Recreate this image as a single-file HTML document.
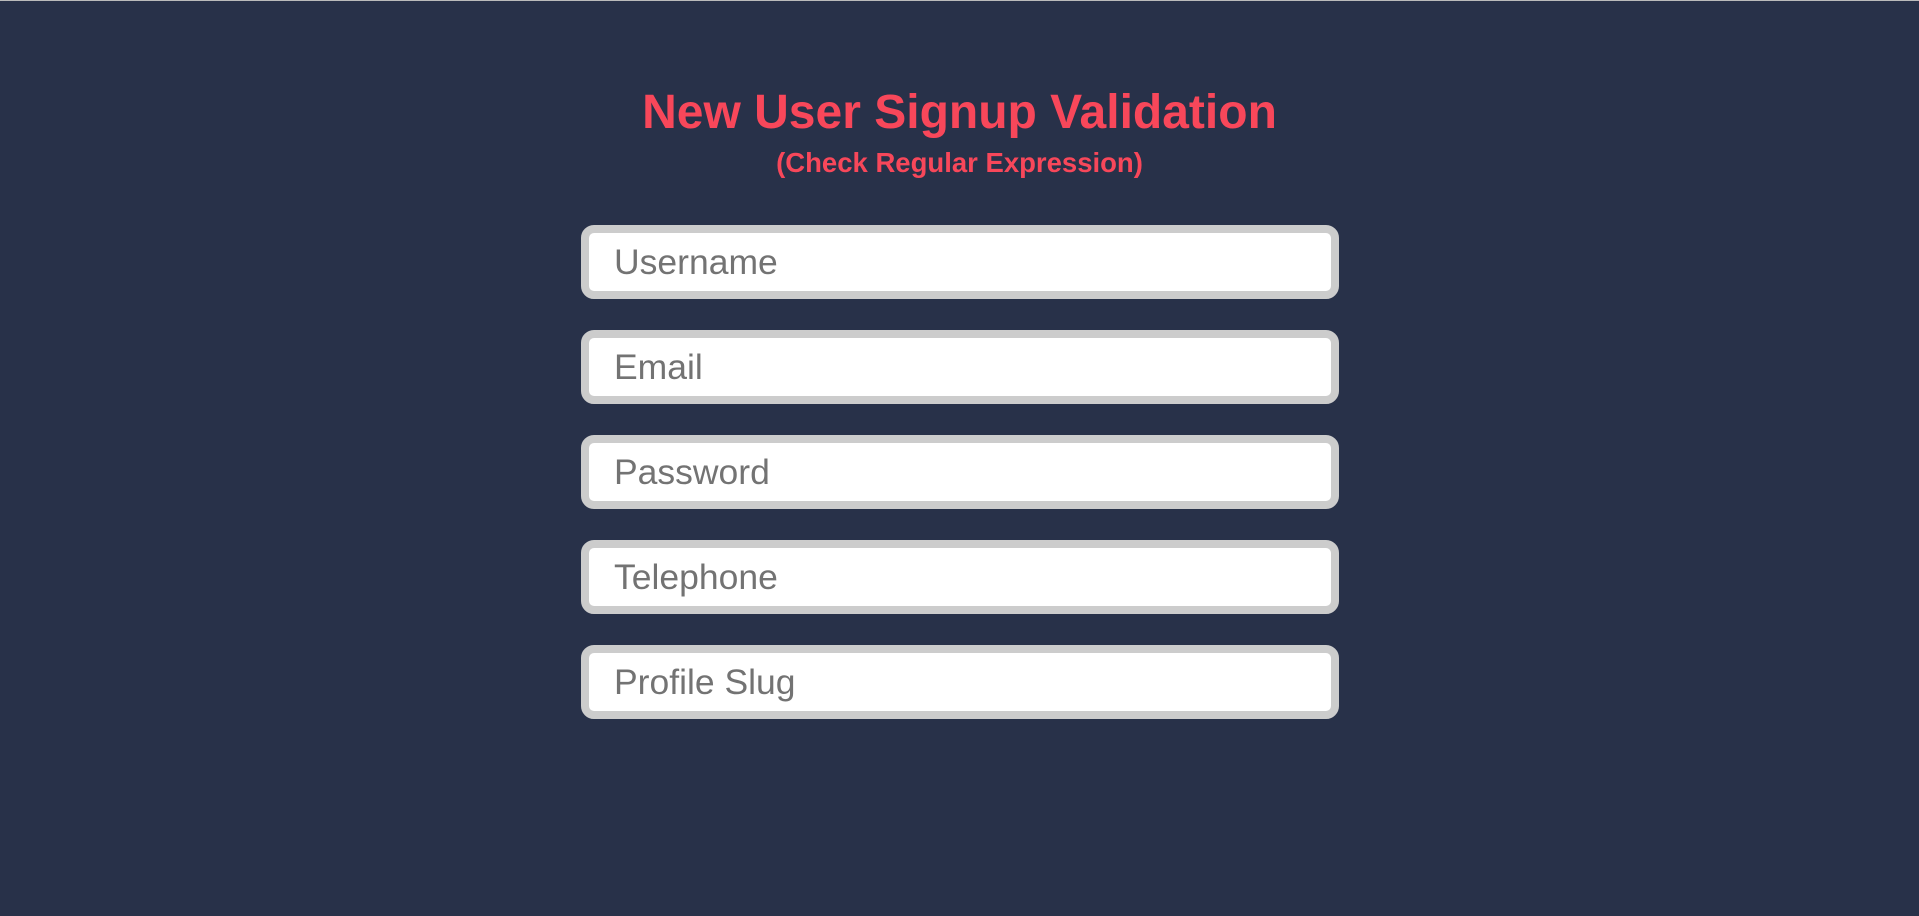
<!DOCTYPE html>
<html><head><meta charset="utf-8"><style>
html,body{margin:0;padding:0;width:1919px;height:916px;overflow:hidden;background:#283149;font-family:"Liberation Sans",Arial,sans-serif;}
body{border-top:1px solid #bbb;box-sizing:border-box;position:relative;}
h1{position:absolute;top:84px;left:0;width:100%;text-align:center;margin:0;color:#f8475a;font-size:48px;font-weight:bold;line-height:56px;}
h2{position:absolute;top:146px;left:0;width:100%;text-align:center;margin:0;color:#f8475a;font-size:27.5px;font-weight:bold;line-height:32px;}
.box{position:absolute;left:581px;width:758px;height:74px;box-sizing:border-box;border:8px solid #cccccc;border-radius:13px;background:#fff;}
.box span{position:absolute;left:25px;top:0;line-height:58px;font-size:35.5px;color:#737373;}
</style></head><body>
<h1>New User Signup Validation</h1>
<h2>(Check Regular Expression)</h2>
<div class="box" style="top:224px"><span>Username</span></div>
<div class="box" style="top:329px"><span>Email</span></div>
<div class="box" style="top:434px"><span>Password</span></div>
<div class="box" style="top:539px"><span>Telephone</span></div>
<div class="box" style="top:644px"><span>Profile Slug</span></div>
</body></html>
